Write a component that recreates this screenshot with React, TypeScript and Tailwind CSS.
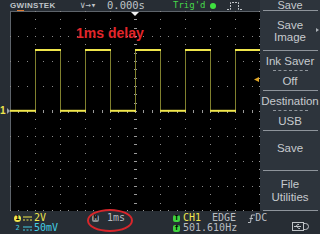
import type { ReactNode } from 'react'

const SUB = 25 / 3

function ScopeGrid() {
    const dots: ReactNode[] = []
    // dotted division lines
    for (let k = 1; k < 10; k++) {
        if (k === 5) continue
        for (let i = 0; i <= 24; i++) {
            dots.push(<rect key={`v${k}-${i}`} x={25 * k} y={Math.round(i * SUB)} width={1} height={1} />)
        }
    }
    for (let k = 1; k < 8; k++) {
        if (k === 4) continue
        for (let i = 0; i <= 30; i++) {
            dots.push(<rect key={`h${k}-${i}`} x={Math.round(i * SUB)} y={25 * k} width={1} height={1} />)
        }
    }
    // centre axes with ticks
    const ticks: ReactNode[] = []
    for (let i = 1; i < 30; i++) {
        ticks.push(<rect key={`ch${i}`} x={Math.round(i * SUB)} y={99} width={1} height={3} />)
    }
    for (let i = 1; i < 24; i++) {
        ticks.push(<rect key={`cv${i}`} x={124} y={Math.round(i * SUB)} width={3} height={1} />)
    }
    // border dots
    for (let i = 0; i <= 30; i++) {
        ticks.push(<rect key={`bb${i}`} x={Math.round(i * SUB)} y={199} width={1} height={1} />)
    }
    for (let i = 0; i <= 24; i++) {
        ticks.push(<rect key={`br${i}`} x={249} y={Math.round(i * SUB)} width={1} height={1} />)
    }

    const highs = [25, 75, 125, 175, 225]
    const lows = [0, 50, 100, 150, 200]
    const edges = [25, 50, 75, 100, 125, 150, 175, 200, 225]

    return (
        <svg width="250" height="200" viewBox="0 0 250 200" className="block bg-black">
            <line x1="0" y1="0.5" x2="250" y2="0.5" stroke="#5d636a" />
            <line x1="0.5" y1="0" x2="0.5" y2="200" stroke="#5d636a" />
            <g fill="#8a8a8a">{dots}</g>
            <g fill="#9a9a9a">{ticks}</g>
            <g stroke="#80802e" strokeWidth="1">
                {edges.map((x) => (
                    <line key={x} x1={x + 0.5} y1="39" x2={x + 0.5} y2="100" />
                ))}
            </g>
            <g stroke="#f0e64c" strokeWidth="2">
                {highs.map((x) => (
                    <line key={x} x1={x} y1="39" x2={Math.min(x + 26, 250)} y2="39" />
                ))}
                {lows.map((x) => (
                    <line key={x} x1={x} y1="99.8" x2={x + 26} y2="99.8" />
                ))}
            </g>
            <polygon points="121,1 129,1 125,5" fill="#f2f2f2" />
            <polygon points="249,66 244,68.5 249,71" fill="#e0a626" />
        </svg>
    )
}

function DcSymbol({ color }: { color: string }) {
    return (
        <svg width="9" height="5" viewBox="0 0 9 5" className="block">
            <rect x="0" y="0.5" width="9" height="1" fill={color} />
            <rect x="0" y="3.5" width="2" height="1" fill={color} />
            <rect x="3.5" y="3.5" width="2" height="1" fill={color} />
            <rect x="7" y="3.5" width="2" height="1" fill={color} />
        </svg>
    )
}

function Badge({ bg, round, children }: { bg: string; round?: boolean; children: ReactNode }) {
    return (
        <span
            className={`flex h-[7px] w-[7px] items-center justify-center text-[7px] font-bold leading-none text-black ${bg} ${round ? 'rounded-full' : 'rounded-[2px]'}`}
        >
            {children}
        </span>
    )
}

function UsbIcon() {
    return (
        <svg width="17" height="9" viewBox="0 0 17 9" className="block">
            <rect x="0.5" y="0.5" width="11" height="8" fill="none" stroke="#c0c4c8" />
            <path d="M2 4.5 H9 M4 4.5 L5.5 2.5 H7 M5 4.5 L6.5 6.5 H8" stroke="#c0c4c8" fill="none" />
            <path d="M11.5 1.5 H13.5 A3 3 0 0 1 13.5 7.5 H11.5" stroke="#c0c4c8" fill="none" />
        </svg>
    )
}

function MenuLine() {
    return <div className="ml-[3px] mr-[2px] h-px bg-[#8e949b]" />
}

function Dashed() {
    return <div className="mx-auto mb-[5px] mt-[4px] h-0 w-[35px] border-t border-dashed border-[#8e949b]" />
}

export default function App() {
    return (
        <div className="relative flex h-[234px] w-[320px] flex-col overflow-hidden bg-[#272d34] font-['DejaVu_Sans_Mono',monospace]">
            <div className="flex h-[211px]">
                <div className="flex w-[260px] flex-col">
                    {/* top bar */}
                    <div className="flex h-[11px] items-center text-[#bfc3c8]">
                        <div className="w-[80px] pl-[10px] font-['Liberation_Sans',sans-serif] text-[8px] font-bold leading-none tracking-[0.3px]">
                            G<span className="border-b border-[#e07a30]">W</span>INSTEK
                        </div>
                        <div className="w-[27px] text-[9px] leading-none">∨→▾</div>
                        <div className="w-[66px] text-[10.5px] leading-none">0.000s</div>
                        <div className="flex w-[54px] items-center text-[9px] leading-none text-[#46d84a]">
                            Trig'd
                            <span className="ml-[4px] h-[6px] w-[6px] rounded-full bg-[#3fe03f]" />
                        </div>
                        <svg width="16" height="9" viewBox="0 0 16 9" className="block">
                            <path d="M0 8.5 H3.5 V1.5 H11.5 V8.5 H16" stroke="#c0c4c8" fill="none" strokeDasharray="2 1" />
                        </svg>
                    </div>
                    {/* scope area */}
                    <div className="flex h-[200px]">
                        <div className="flex w-[10px] items-start pt-[95px]">
                            <span className="font-['Liberation_Sans',sans-serif] text-[10px] font-bold leading-[9px] text-[#f0e64c]">1</span>
                            <span className="ml-[1px] mt-[2px] h-0 w-0 border-y-[3px] border-l-[3px] border-y-transparent border-l-[#9aa0a6]" />
                        </div>
                        <ScopeGrid />
                    </div>
                </div>
                {/* soft menu */}
                <div className="flex w-[60px] flex-col bg-[#2d343c] font-['Liberation_Sans',sans-serif] text-[11.5px] text-[#c6cace]">
                    <div className="flex h-[10px] items-end justify-center text-[11px] leading-[10px]">Save</div>
                    <MenuLine />
                    <div className="relative flex h-[39px] flex-col items-center justify-center leading-[12px]">
                        <span>Save</span>
                        <span>Image</span>
                        <span className="absolute right-[1px] top-[17px] h-0 w-0 border-y-[2.5px] border-l-[3px] border-y-transparent border-l-[#aab0b6]" />
                    </div>
                    <MenuLine />
                    <div className="flex h-[39px] flex-col justify-center text-center leading-[10px]">
                        <span>Ink Saver</span>
                        <Dashed />
                        <span>Off</span>
                    </div>
                    <MenuLine />
                    <div className="flex h-[39px] flex-col justify-center text-center leading-[10px]">
                        <span>Destination</span>
                        <Dashed />
                        <span>USB</span>
                    </div>
                    <MenuLine />
                    <div className="flex h-[39px] items-center justify-center pb-[4px] leading-none">Save</div>
                    <MenuLine />
                    <div className="flex h-[39px] flex-col items-center justify-center leading-[13px]">
                        <span>File</span>
                        <span>Utilities</span>
                    </div>
                    <MenuLine />
                </div>
            </div>
            {/* status */}
            <div className="flex h-[23px] pl-[14px] pt-[2px] text-[10px] leading-[10px] text-[#b9bdc2]">
                <div className="flex w-[78px] flex-col">
                    <div className="flex h-[10px] items-center">
                        <Badge bg="bg-[#f0e64c]" round>1</Badge>
                        <span className="ml-[2px]"><DcSymbol color="#f0e64c" /></span>
                        <span className="ml-[2px] text-[#f0e64c]">2V</span>
                    </div>
                    <div className="flex h-[10px] items-center">
                        <span className="flex w-[7px] justify-center text-[7px] leading-none text-[#44cde4]">2</span>
                        <span className="ml-[2px]"><DcSymbol color="#44cde4" /></span>
                        <span className="ml-[2px] text-[#44cde4]">50mV</span>
                    </div>
                </div>
                <div className="flex w-[81px] flex-col">
                    <div className="flex h-[10px] items-center">
                        <Badge bg="bg-[#8c8f93]">M</Badge>
                        <span className="ml-[8px]">1ms</span>
                    </div>
                </div>
                <div className="flex w-[119px] flex-col">
                    <div className="flex h-[10px] items-center">
                        <Badge bg="bg-[#3fd23f]">T</Badge>
                        <span className="ml-[3px] text-[#f0e64c]">CH1</span>
                        <span className="ml-[11px]">EDGE</span>
                        <svg width="7" height="9" viewBox="0 0 7 9" className="ml-[12px] block">
                            <path d="M0 8.5 H2.5 L3.5 1 H7 M1.5 4.5 H5" stroke="#b9bdc2" fill="none" />
                        </svg>
                        <span>DC</span>
                    </div>
                    <div className="flex h-[10px] items-center">
                        <Badge bg="bg-[#3fd23f]">f</Badge>
                        <span className="ml-[3px]">501.610Hz</span>
                    </div>
                </div>
                <div className="flex items-end pb-[3px]">
                    <UsbIcon />
                </div>
            </div>
            {/* annotations */}
            <div className="absolute left-[76px] top-[26px] font-['Liberation_Sans',sans-serif] text-[14px] font-bold leading-none text-[#e3262b]">
                1ms delay
            </div>
            <div className="absolute left-[87px] top-[209px] h-[23px] w-[46px] rounded-[50%] border-2 border-[#d8262b]" />
        </div>
    )
}
